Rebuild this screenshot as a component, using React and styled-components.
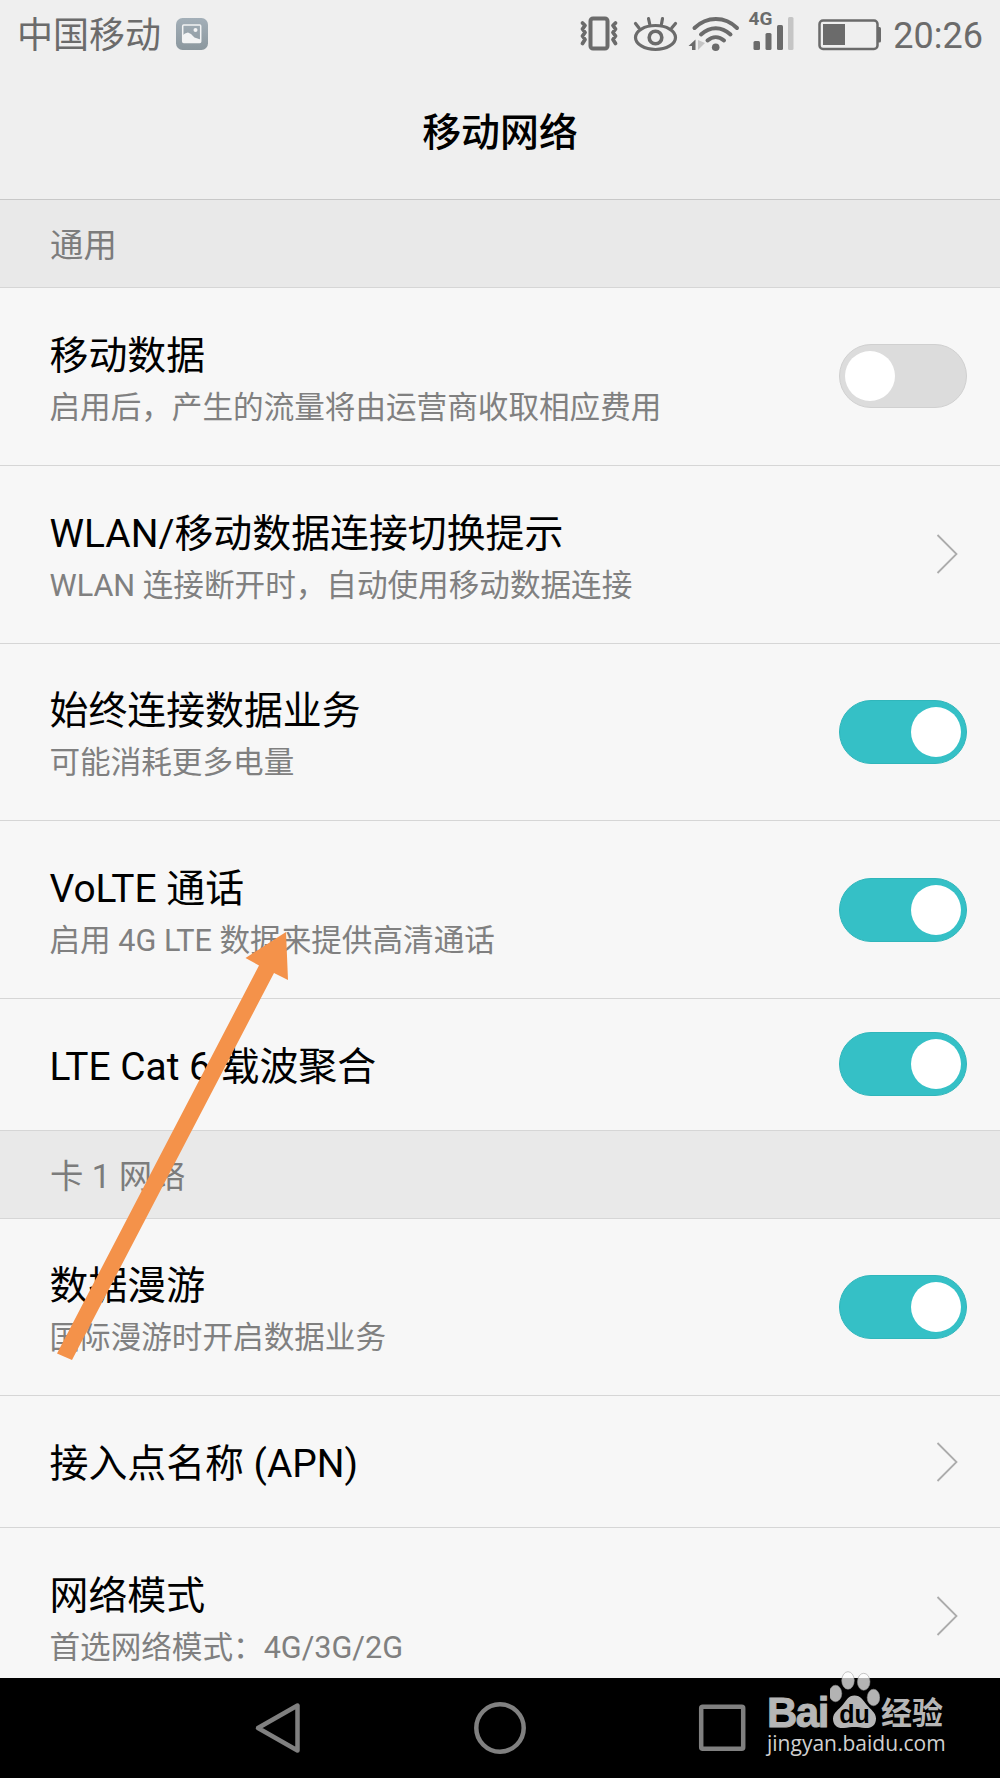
import React from "react";
import styled, { createGlobalStyle } from "styled-components";

const GlobalStyle = createGlobalStyle`
  * {
    box-sizing: border-box;
  }
  body {
    margin: 0;
    background: #f7f7f7;
    font-family: Roboto, "Noto Sans CJK SC", sans-serif;
  }
`;

const Screen = styled.div`
  position: relative;
  width: 1000px;
  height: 1778px;
  overflow: hidden;
  display: flex;
  flex-direction: column;
  background: #f7f7f7;
`;

const Header = styled.header`
  flex: 0 0 200px;
  background: #efefef;
  border-bottom: 1px solid #c8c8c8;
  h1 {
    margin: 0;
    padding-top: 29px;
    font-size: 38.9px;
    line-height: 72px;
    font-weight: 500;
    text-align: center;
    color: #000;
  }
`;

const StatusBar = styled.div`
  display: flex;
  align-items: center;
  height: 68px;
  padding: 0 17px;
  color: #6b6b6b;
  font-size: 36px;
  svg {
    display: block;
    flex: 0 0 auto;
  }
  .carrier {
    margin-right: 15px;
    line-height: 66px;
    padding-top: 3px;
  }
  .icons {
    margin-left: auto;
  }
  .clock {
    width: 100px;
    padding-top: 3px;
    line-height: 66px;
    text-align: right;
    white-space: nowrap;
  }
`;

const Content = styled.main`
  flex: 1 1 0;
  min-height: 0;
  overflow: hidden;
`;

const SectionTitle = styled.h2`
  margin: 0;
  height: 88px;
  padding: 0 50px;
  background: #e9e9e9;
  border-bottom: 1px solid #d6d6d6;
  color: #7c7c7c;
  font-size: 33.4px;
  font-weight: 400;
  line-height: 92px;
`;

const Item = styled.div`
  display: flex;
  align-items: center;
  justify-content: space-between;
  height: ${props => (props.$single ? "131.5px" : "177.75px")};
  padding: 0 33px 0 49.5px;
  border-bottom: 1px solid #d6d6d6;
  .text {
    padding-top: ${props => (props.$single ? "5px" : "10px")};
  }
  h3 {
    margin: 0;
    font-size: 38.9px;
    font-weight: 400;
    line-height: 52px;
    color: #000;
  }
  p {
    margin: 0;
    font-size: 30.6px;
    line-height: 51px;
    color: #808080;
  }
`;

const Switch = styled.span`
  display: flex;
  align-items: center;
  justify-content: ${props => (props.$on ? "flex-end" : "flex-start")};
  flex: 0 0 128px;
  height: 64px;
  padding: 0 5px;
  border-radius: 32px;
  border: 1px solid ${props => (props.$on ? "#30b6bb" : "#d0d0d0")};
  background: ${props => (props.$on ? "#35c0c6" : "#dcdcdc")};
  &:after {
    content: "";
    width: 50px;
    height: 50px;
    border-radius: 50%;
    background: #fff;
  }
`;

const ChevronIcon = styled.svg`
  flex: 0 0 auto;
  margin-right: 9px;
`;

const NavBar = styled.nav`
  flex: 0 0 100px;
  display: flex;
  align-items: center;
  justify-content: center;
  background: #000;
`;

const Arrow = styled.svg`
  position: absolute;
  left: 50px;
  top: 925px;
`;

const Watermark = styled.div`
  position: absolute;
  left: 767px;
  top: 1668px;
  width: 182px;
  color: #b6b6b6;
  .brand {
    display: flex;
    align-items: flex-end;
    height: 62px;
  }
  .latin {
    width: 63px;
    margin-bottom: -1px;
    font-family: "Liberation Sans", sans-serif;
    font-size: 42px;
    font-weight: 700;
    line-height: 36px;
    letter-spacing: -1.5px;
    -webkit-text-stroke: 1px #b6b6b6;
  }
  .cjk {
    margin: 0 0 -2px 1px;
    font-size: 31px;
    font-weight: 700;
    line-height: 37px;
    white-space: nowrap;
  }
  .url {
    font-family: "Open Sans", sans-serif;
    font-size: 21px;
    line-height: 27px;
    color: #d0d0d0;
  }
`;

const StatusIcons = () => (
  <svg className="icons" width="310" height="68" viewBox="573 0 310 68">
    <g fill="none" stroke="#6b6b6b" strokeLinecap="round">
      {/* vibrate */}
      <rect x="590.5" y="18.5" width="17" height="30" rx="2.5" strokeWidth="4" />
      <path
        d="M582.5 23l2.5 2.5-2.5 3.5 2.5 3.5-2.5 3.5 2.5 3.500-2.5 4M615.5 23l-2.5 2.5 2.5 3.5-2.5 3.5 2.5 3.5-2.5 3.5 2.5 4"
        strokeWidth="3.8"
        strokeLinejoin="round"
      />
      {/* eye comfort */}
      <ellipse cx="655.5" cy="37.5" rx="20" ry="12" strokeWidth="3.2" />
      <circle cx="655.5" cy="37.5" r="6.3" strokeWidth="3.6" />
      <path
        d="M635.5 23.5l3.5 4.5M648.5 18.5l1.2 5.5M662.5 18.5l-1 5.5M675.5 23.5l-3.8 4.5"
        strokeWidth="3.2"
      />
      {/* wifi */}
      <path
        d="M694.5 28c12.5-12 30.5-12 42.5 0M701 34.5c9-8.5 20.5-8.5 29.5 0M707.5 40.5c5-4.5 11.5-4.5 16.5 0"
        strokeWidth="4"
      />
    </g>
    <g fill="#6b6b6b">
      <circle cx="715.7" cy="47.3" r="3.8" />
      <path d="M695.5 39.5v10.500h-3.500v-4h-3.500z" />
      <path d="M698 40v10l7-7z" fill="#c5c5c5" />
      {/* signal */}
      <rect x="753.5" y="41" width="6.5" height="9" rx="1.5" />
      <rect x="765.5" y="33" width="6" height="17" rx="1.5" />
      <rect x="777" y="25" width="6" height="25" rx="1.5" />
      <rect x="788" y="17" width="5.5" height="33" rx="1.5" fill="#c5c5c5" />
      <text x="748.5" y="25" fontSize="19" fontWeight="700">
        4G
      </text>
      {/* battery */}
      <rect x="823" y="24" width="22" height="21" />
      <path d="M878 27h1.5q1.5 0 1.5 1.5v12.5q0 1.5-1.5 1.5h-1.5z" />
    </g>
    <rect
      x="819.5"
      y="20.5"
      width="58"
      height="28.5"
      rx="3.5"
      fill="none"
      stroke="#6b6b6b"
      strokeWidth="2.5"
    />
  </svg>
);

const PictureIcon = () => (
  <svg width="32" height="32" viewBox="0 0 32 32">
    <defs>
      <linearGradient id="tile" x1="0" y1="0" x2="0" y2="1">
        <stop offset="0" stopColor="#a3afb8" />
        <stop offset="1" stopColor="#8b979e" />
      </linearGradient>
    </defs>
    <rect width="32" height="32" rx="6.5" fill="url(#tile)" />
    <rect
      x="6.7"
      y="7"
      width="18"
      height="17.5"
      rx="1"
      fill="none"
      stroke="#f2f3f4"
      strokeWidth="1.5"
    />
    <path d="M7 17l2-1.500 3-1 3 1.500 3.500 3.500 6 2v3h-17.500z" fill="#f2f3f4" />
    <circle cx="19.5" cy="12" r="2" fill="#f2f3f4" />
  </svg>
);

const Chevron = () => (
  <ChevronIcon width="22" height="42" viewBox="0 0 22 42">
    <path d="M1.5 2L20.5 21 1.5 40" fill="none" stroke="#acacac" strokeWidth="1.8" />
  </ChevronIcon>
);

const Paw = () => (
  <svg width="50" height="62" viewBox="0 0 50 62">
    <g fill="#fff" fillOpacity="0.7" stroke="#909090" strokeOpacity="0.5">
      <ellipse cx="5.5" cy="25.5" rx="6.3" ry="8.3" />
      <ellipse cx="18" cy="12.5" rx="6.3" ry="8.8" />
      <ellipse cx="33.7" cy="13.8" rx="6.3" ry="8.5" />
      <ellipse cx="43.5" cy="29.5" rx="6.3" ry="8.3" />
    </g>
    <path
      d="M24.5 27.5c6 0 9 5 12 9 4 5 9.5 8 9.5 14 0 7-5 10-11 9.5-4-.4-7-1-10.5-1s-6.5.6-10.5 1c-7 .5-11-3-11-9.5 0-6 6-9 10-14 3-4 5.500-9 11.5-9z"
      fill="#b6b6b6"
    />
    <text
      x="24.5"
      y="55"
      textAnchor="middle"
      fontFamily="Liberation Sans, sans-serif"
      fontSize="25"
      fontWeight="700"
      fill="#000"
    >
      du
    </text>
  </svg>
);

const NavIcons = () => (
  <svg width="500" height="60" viewBox="250 1698 500 60">
    <g fill="none" stroke="#808080" strokeWidth="4.5" strokeLinejoin="round">
      <path d="M297.5 1705.5v45L258 1728z" />
      <circle cx="500" cy="1728" r="23.7" />
      <rect x="701.2" y="1706.8" width="42" height="42" rx="1.5" />
    </g>
  </svg>
);

const Row = ({ title, summary, on }) => (
  <Item $single={!summary}>
    <div className="text">
      <h3>{title}</h3>
      {summary ? <p>{summary}</p> : null}
    </div>
    {on === undefined ? <Chevron /> : <Switch $on={on} />}
  </Item>
);

const general = [
  { title: "移动数据", summary: "启用后，产生的流量将由运营商收取相应费用", on: false },
  { title: "WLAN/移动数据连接切换提示", summary: "WLAN 连接断开时，自动使用移动数据连接" },
  { title: "始终连接数据业务", summary: "可能消耗更多电量", on: true },
  { title: "VoLTE 通话", summary: "启用 4G LTE 数据来提供高清通话", on: true },
  { title: "LTE Cat 6 载波聚合", on: true }
];

const card = [
  { title: "数据漫游", summary: "国际漫游时开启数据业务", on: true },
  { title: "接入点名称 (APN)" },
  { title: "网络模式", summary: "首选网络模式：4G/3G/2G" }
];

export default function App() {
  return (
    <Screen>
      <GlobalStyle />
      <Header>
        <StatusBar>
          <span className="carrier">中国移动</span>
          <PictureIcon />
          <StatusIcons />
          <span className="clock">20:26</span>
        </StatusBar>
        <h1>移动网络</h1>
      </Header>
      <Content>
        <SectionTitle>通用</SectionTitle>
        {general.map(item => (
          <Row key={item.title} {...item} />
        ))}
        <SectionTitle>卡 1 网络</SectionTitle>
        {card.map(item => (
          <Row key={item.title} {...item} />
        ))}
      </Content>
      <NavBar>
        <NavIcons />
      </NavBar>
      <Arrow width="245" height="440" viewBox="50 925 245 440">
        <path
          d="M286 932L288 980 274 973 72 1360 57 1353.5 259 965.5 245.5 958z"
          fill="#f4924a"
        />
      </Arrow>
      <Watermark>
        <div className="brand">
          <span className="latin">Bai</span>
          <Paw />
          <span className="cjk">经验</span>
        </div>
        <div className="url">jingyan.baidu.com</div>
      </Watermark>
    </Screen>
  );
}
